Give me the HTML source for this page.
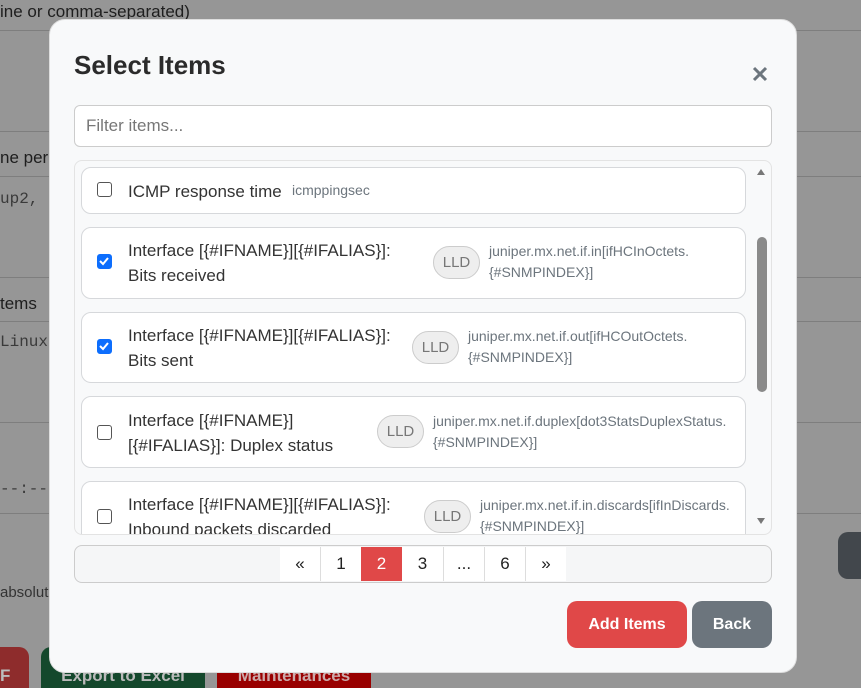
<!DOCTYPE html>
<html><head><style>
*{box-sizing:border-box;margin:0;padding:0}
html,body{width:861px;height:688px;overflow:hidden}
body{background:#969696;font-family:"Liberation Sans",sans-serif;position:relative;color:#212529}
.a{position:absolute}
.ln{position:absolute;left:0;width:861px;height:1px;background:#7e7e7e}
.bgt{position:absolute;color:#1e1e1e;font-size:17px;white-space:nowrap}
.mono{font-family:"Liberation Mono",monospace;color:#3a3a3a;font-size:16px}
.modal{position:absolute;left:49px;top:19px;width:748px;height:654px;background:#f8f9fa;border-radius:16px;border:1px solid #ddd}
.card{position:absolute;left:81px;width:665px;background:#fff;border:1px solid #d6d8db;border-radius:10px}
.cb{position:absolute;left:97px;width:15px;height:15px;border:1.5px solid #555;border-radius:3px;background:#fff}
.cb.on{background:#0d6efd;border-color:#0d6efd}
.t{position:absolute;left:128px;font-size:17px;line-height:25px;color:#333}
.k{position:absolute;font-size:14px;line-height:21px;color:#6c757d}
.lld{position:absolute;width:47px;height:33px;border:1px solid #ccc;border-radius:17px;background:#eee;color:#777;font-size:15px;text-align:center;line-height:31px}
.pg{position:absolute;top:547px;height:34px;width:41px;background:#fff;border-left:1px solid #ddd;text-align:center;line-height:34px;font-size:17px;color:#222}
.bb{position:absolute;top:647px;height:41px;color:#bbb;font-weight:bold;font-size:17px;line-height:58px;text-align:center;overflow:hidden}
</style></head><body>
<div class="bgt" style="left:0;top:2px">ine or comma-separated)</div>
<div class="ln" style="top:30px"></div>
<div class="ln" style="top:131px"></div>
<div class="bgt" style="left:0;top:148px">ne per</div>
<div class="ln" style="top:176px"></div>
<div class="bgt mono" style="left:0;top:190px">up2, g</div>
<div class="ln" style="top:277px"></div>
<div class="bgt" style="left:0;top:294px">tems</div>
<div class="ln" style="top:321px"></div>
<div class="bgt mono" style="left:0;top:333px">Linux</div>
<div class="ln" style="top:422px"></div>
<div class="bgt mono" style="left:0;top:480px">--:--</div>
<div class="ln" style="top:513px"></div>
<div class="bgt" style="left:0;top:584px;font-size:15px;color:#333">absolute</div>
<div class="bb" style="left:0;width:29px;background:#8e2c2c;border-radius:0 10px 0 0;text-align:left">F</div>
<div class="bb" style="left:41px;width:164px;background:#14482c;border-radius:10px 10px 0 0">Export to Excel</div>
<div class="bb" style="left:217px;width:154px;background:#990000;color:#caa">Maintenances</div>
<div class="a" style="left:838px;top:532px;width:30px;height:47px;background:#42474c;border-radius:10px 0 0 10px"></div>

<div class="modal"></div>
<div class="a" style="left:74px;top:50px;font-size:26px;font-weight:bold;color:#2b2b2b">Select Items</div>
<svg class="a" style="left:752px;top:66px" width="16" height="16"><path d="M2 2L14 14M14 2L2 14" stroke="#6c757d" stroke-width="3"/></svg>
<div class="a" style="left:74px;top:105px;width:698px;height:42px;background:#fff;border:1px solid #ccc;border-radius:6px;padding:0 11px;line-height:40px;font-size:17px;color:#777">Filter items...</div>

<div class="a" style="left:74px;top:160px;width:698px;height:375px;border:1px solid #e3e3e3;border-radius:8px;overflow:hidden;background:#f8f9fa"></div>
<div class="a" style="left:75px;top:161px;width:696px;height:373px;overflow:hidden">
 <div style="position:absolute;left:-75px;top:-161px;width:861px;height:700px">
  <div class="card" style="top:167px;height:47px"></div>
  <div class="cb" style="top:182px"></div>
  <div class="t" style="top:179px">ICMP response time</div>
  <div class="k" style="left:292px;top:180px">icmppingsec</div>

  <div class="card" style="top:227px;height:72px"></div>
  <div class="cb on" style="top:254px"><svg width="12" height="12" style="position:absolute;left:0;top:0"><path d="M2 6l3 3 5-6" stroke="#fff" stroke-width="2" fill="none"/></svg></div>
  <div class="t" style="top:238px">Interface [{#IFNAME}][{#IFALIAS}]:<br>Bits received</div>
  <div class="lld" style="left:433px;top:246px">LLD</div>
  <div class="k" style="left:489px;top:241px">juniper.mx.net.if.in[ifHCInOctets.<br>{#SNMPINDEX}]</div>

  <div class="card" style="top:312px;height:71px"></div>
  <div class="cb on" style="top:339px"><svg width="12" height="12" style="position:absolute;left:0;top:0"><path d="M2 6l3 3 5-6" stroke="#fff" stroke-width="2" fill="none"/></svg></div>
  <div class="t" style="top:323px">Interface [{#IFNAME}][{#IFALIAS}]:<br>Bits sent</div>
  <div class="lld" style="left:412px;top:331px">LLD</div>
  <div class="k" style="left:468px;top:326px">juniper.mx.net.if.out[ifHCOutOctets.<br>{#SNMPINDEX}]</div>

  <div class="card" style="top:396px;height:72px"></div>
  <div class="cb" style="top:425px"></div>
  <div class="t" style="top:408px">Interface [{#IFNAME}]<br>[{#IFALIAS}]: Duplex status</div>
  <div class="lld" style="left:377px;top:415px">LLD</div>
  <div class="k" style="left:433px;top:411px">juniper.mx.net.if.duplex[dot3StatsDuplexStatus.<br>{#SNMPINDEX}]</div>

  <div class="card" style="top:481px;height:72px"></div>
  <div class="cb" style="top:509px"></div>
  <div class="t" style="top:492px">Interface [{#IFNAME}][{#IFALIAS}]:<br>Inbound packets discarded</div>
  <div class="lld" style="left:424px;top:500px">LLD</div>
  <div class="k" style="left:480px;top:495px">juniper.mx.net.if.in.discards[ifInDiscards.<br>{#SNMPINDEX}]</div>
 </div>
</div>
<div class="a" style="left:757px;top:169px;width:0;height:0;border:4px solid transparent;border-bottom:6px solid #777;border-top:0"></div>
<div class="a" style="left:757px;top:518px;width:0;height:0;border:4px solid transparent;border-top:6px solid #777;border-bottom:0"></div>
<div class="a" style="left:757px;top:237px;width:10px;height:155px;background:#8a8a8a;border-radius:5px"></div>

<div class="a" style="left:74px;top:545px;width:698px;height:38px;border:1px solid #ccc;border-radius:8px;background:#f5f6f7"></div>
<div class="pg" style="left:280px;border-left:none;width:40px">«</div>
<div class="pg" style="left:320px">1</div>
<div class="pg" style="left:361px;background:#e04848;color:#fff;border-left:none">2</div>
<div class="pg" style="left:402px;border-left:none">3</div>
<div class="pg" style="left:443px">...</div>
<div class="pg" style="left:484px">6</div>
<div class="pg" style="left:525px">»</div>

<div class="a" style="left:567px;top:601px;width:120px;height:47px;background:#e04848;border-radius:10px;color:#fff;font-weight:bold;font-size:16px;text-align:center;line-height:47px">Add Items</div>
<div class="a" style="left:692px;top:601px;width:80px;height:47px;background:#6c757d;border-radius:10px;color:#fff;font-weight:bold;font-size:16px;text-align:center;line-height:47px">Back</div>
</body></html>
